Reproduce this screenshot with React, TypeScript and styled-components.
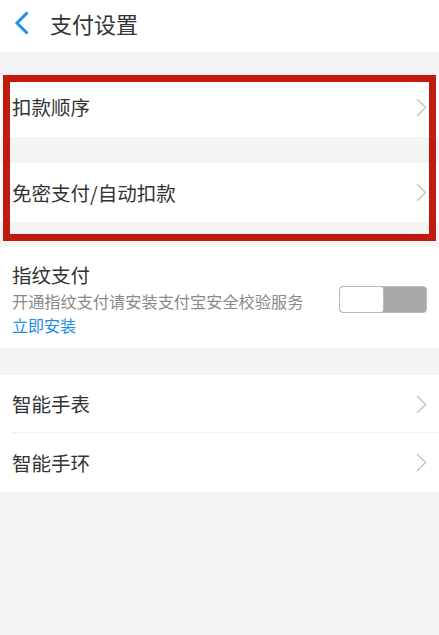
import React from 'react';
import styled, { createGlobalStyle } from 'styled-components';

const GlobalStyle = createGlobalStyle`
    html, body {
        margin: 0;
        padding: 0;
        background: #f4f4f4;
    }
    body {
        font-family: "Noto Sans CJK SC", "Noto Sans", sans-serif;
        color: #333;
    }
`;

interface RowItem {
    id: number,
    label: string
}

const payRows: RowItem[] = [
    { id: 0, label: '扣款顺序' },
    { id: 1, label: '免密支付/自动扣款' }
];

const deviceRows: RowItem[] = [
    { id: 0, label: '智能手表' },
    { id: 1, label: '智能手环' }
];

const BackIcon = () => (
    <svg width="16" height="24" viewBox="0 0 16 24">
        <polyline points="13.5,1.5 3,12 13.5,22.5" fill="none" stroke="#1d8ff0" strokeWidth="3" strokeLinecap="butt" />
    </svg>
);

const Chevron = () => (
    <svg width="11" height="19" viewBox="0 0 11 19">
        <polyline points="1,1 9.5,9.5 1,18" fill="none" stroke="#c8c8c8" strokeWidth="1.6" />
    </svg>
);

const App = () => (
    <Page>
        <GlobalStyle />
        <Header>
            <BackIcon />
            <Title>支付设置</Title>
        </Header>

        <Group $gap={25}>
            <Row $height={60}>
                <Label>{payRows[0].label}</Label>
                <Chevron />
            </Row>
        </Group>
        <Group $gap={26}>
            <Row $height={59}>
                <Label>{payRows[1].label}</Label>
                <Chevron />
            </Row>
        </Group>

        <Group $gap={25}>
            <SwitchRow>
                <Info>
                    <Label>指纹支付</Label>
                    <Hint>开通指纹支付请安装支付宝安全校验服务</Hint>
                    <Link>立即安装</Link>
                </Info>
                <Toggle>
                    <Knob />
                </Toggle>
            </SwitchRow>
        </Group>

        <Group $gap={27}>
            {deviceRows.map((row) => (
                <Row key={row.id} $height={row.id === 0 ? 58 : 59} $divider={row.id > 0}>
                    <Label>{row.label}</Label>
                    <Chevron />
                </Row>
            ))}
        </Group>

        <Highlight />
    </Page>
);

export default App;

const Page = styled.div`
    position: relative;
    min-height: 635px;
    background: #f4f4f4;
`;

const Header = styled.div`
    height: 52px;
    background: #fff;
    display: flex;
    align-items: center;
    padding-left: 14px;
    padding-bottom: 7px;
    box-sizing: border-box;

    svg {
        margin-right: 20px;
    }
`;

const Title = styled.span`
    font-size: 22px;
    color: #333;
    line-height: 1;
`;

const Group = styled.div<{ $gap: number }>`
    margin-top: ${(p) => p.$gap}px;
    background: #fff;
`;

const Row = styled.div<{ $height: number, $divider?: boolean }>`
    height: ${(p) => p.$height}px;
    display: flex;
    align-items: center;
    justify-content: space-between;
    padding: 0 12px 0 12px;
    position: relative;

    ${(p) => p.$divider && `
        &::before {
            content: '';
            position: absolute;
            top: -1px;
            left: 12px;
            right: 0;
            height: 1px;
            background: #f0f0f0;
        }
    `}
`;

const Label = styled.div`
    font-size: 19.5px;
    line-height: 28px;
    color: #333;
`;

const SwitchRow = styled.div`
    height: 101px;
    box-sizing: border-box;
    padding: 14px 12px 11px 12px;
    display: flex;
    align-items: center;
    justify-content: space-between;
`;

const Info = styled.div`
    display: flex;
    flex-direction: column;
`;

const Hint = styled.div`
    font-size: 16.2px;
    line-height: 24px;
    color: #8a8a8a;
`;

const Link = styled.div`
    font-size: 16px;
    line-height: 24px;
    color: #1a8ee8;
`;

const Toggle = styled.div`
    width: 88px;
    height: 27px;
    box-sizing: border-box;
    border: 1px solid #b9b9b9;
    border-radius: 4px;
    background: #a9aaa8;
    display: flex;
    margin-top: 1px;
    overflow: hidden;
`;

const Knob = styled.div`
    width: 43px;
    height: 100%;
    background: #fff;
    border-right: 1px solid #b9b9b9;
    border-radius: 3px;
`;

const Highlight = styled.div`
    position: absolute;
    left: 3px;
    top: 75px;
    width: 433px;
    height: 166px;
    box-sizing: border-box;
    border: 7px solid #c11b10;
    pointer-events: none;
`;
